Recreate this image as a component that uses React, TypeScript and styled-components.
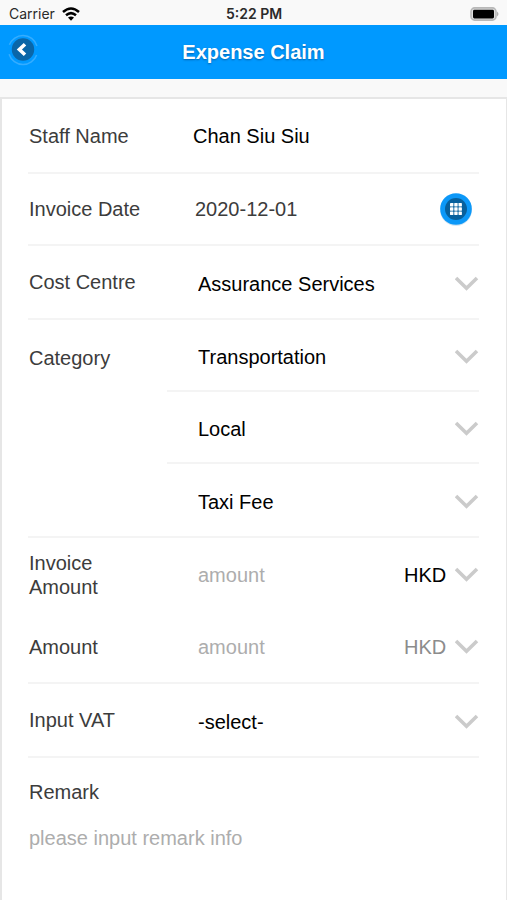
import React, { useState } from "react";
import styled, { createGlobalStyle } from "styled-components";

const GlobalStyle = createGlobalStyle`
  *, *::before, *::after { box-sizing: border-box; }
  body {
    margin: 0;
    background: #f9f9f9;
    color: #3c3c3c;
    font-family: "Liberation Sans", Arial, Helvetica, sans-serif;
    font-size: 20px;
    line-height: 24px;
  }
  button, input, select, textarea {
    margin: 0;
    padding: 0;
    border: 0;
    background: transparent;
    font: inherit;
    color: inherit;
  }
`;

const Screen = styled.div`
  display: flex;
  flex-direction: column;
  min-height: 100vh;
`;

const StatusBar = styled.div`
  display: grid;
  grid-template-columns: 1fr auto 1fr;
  align-items: center;
  height: 25px;
  padding: 2px 8px 0 9px;
  font-family: Inter, sans-serif;
  font-size: 14px;
  line-height: 20px;
  color: #2a2a2a;
`;

const Carrier = styled.div`
  display: flex;
  align-items: center;
  gap: 7px;
  font-family: Inter, sans-serif;
  font-size: 14px;
`;

const Clock = styled.div`
  font-weight: 600;
`;

const BatteryIcon = styled.svg`
  justify-self: end;
`;

const Header = styled.header`
  display: grid;
  grid-template-columns: 40px 1fr 40px;
  align-items: center;
  height: 54px;
  padding: 0 7px;
  background: #0099ff;
`;

const BackButton = styled.button`
  display: flex;
  width: 32px;
  height: 32px;
  margin-bottom: 4px;
`;

const Title = styled.h1`
  margin: 0;
  color: #fff;
  font-size: 20px;
  font-weight: 700;
  line-height: 24px;
  text-align: center;
  text-shadow: 0 1px 2px rgba(0, 50, 100, 0.5);
`;

const Card = styled.form`
  flex: 1;
  margin-top: 18px;
  padding: 0 27px 0 26px;
  background: #fff;
  border: solid #e6e6e6;
  border-width: 2px 1px 0 2px;
`;

const Row = styled.div<{ $height?: number; $divided?: boolean }>`
  display: grid;
  grid-template-columns: 139px 1fr;
  align-items: center;
  height: ${(p) => p.$height ?? 74}px;
  border-bottom: ${(p) => (p.$divided === false ? "0" : "2px solid #f4f4f4")};
`;

const Label = styled.label`
  padding: 0 16px 0 1px;
`;

const Name = styled.output`
  padding-left: 26px;
  color: #000;
`;

const DateField = styled.div`
  display: flex;
  align-items: center;
  justify-content: space-between;
  padding: 0 6px 0 28px;
`;

const TextInput = styled.input`
  flex: 1;
  min-width: 0;
  width: 100%;
  height: 32px;
  outline: none;
  &::placeholder { color: #adadad; opacity: 1; }
`;

const CalendarButton = styled.button`
  display: flex;
  flex: none;
  width: 34px;
  height: 34px;
`;

const Group = styled.fieldset`
  display: grid;
  grid-template-columns: 139px 1fr;
  min-width: 0;
  margin: 0;
  padding: 0;
  border: 0;
  border-bottom: 2px solid #f4f4f4;
`;

const GroupLabel = styled.div`
  padding: 26px 0 0 1px;
`;

const Option = styled.div<{ $last?: boolean }>`
  display: grid;
  align-items: center;
  height: 72px;
  border-bottom: ${(p) => (p.$last ? "0" : "2px solid #f4f4f4")};
`;

const Picker = styled.div<{ $compact?: boolean }>`
  display: grid;
  grid-template-columns: 1fr 24px;
  align-items: center;
  padding: ${(p) => (p.$compact ? "0" : "3px 0 0 31px")};
`;

const Select = styled.select`
  grid-area: 1 / 1 / 2 / 3;
  width: 100%;
  height: 40px;
  appearance: none;
  outline: none;
  color: #000;
  opacity: 1;
  &:disabled { color: #8c8c8c; }
`;

const ChevronIcon = styled.svg`
  grid-area: 1 / 2;
  pointer-events: none;
`;

const AmountField = styled.div`
  display: grid;
  grid-template-columns: 1fr 75px;
  align-items: center;
  padding-left: 31px;
`;

const InvoiceLabel = styled(Label)`
  padding-right: 36px;
`;

const Remark = styled.div`
  display: grid;
  gap: 22px;
  padding: 22px 0 0 1px;
`;

const TextArea = styled.textarea`
  display: block;
  width: 100%;
  height: 48px;
  resize: none;
  outline: none;
  &::placeholder { color: #adadad; opacity: 1; }
`;

const Chevron = () => (
  <ChevronIcon width="24" height="16" viewBox="0 0 24 16" aria-hidden="true">
    <path d="M1 2 L11.5 12.2 L22 2" fill="none" stroke="#cbcbcb" strokeWidth="3.6" />
  </ChevronIcon>
);

type DropdownProps = {
  id?: string;
  name: string;
  options: string[];
  compact?: boolean;
  disabled?: boolean;
};

const Dropdown = ({ id, name, options, compact, disabled }: DropdownProps) => (
  <Picker $compact={compact}>
    <Select id={id} aria-label={id ? undefined : name} disabled={disabled}>
      {options.map((o) => (
        <option key={o}>{o}</option>
      ))}
    </Select>
    <Chevron />
  </Picker>
);

const categories = [
  { name: "Category", value: "Transportation" },
  { name: "Area", value: "Local" },
  { name: "Expense type", value: "Taxi Fee" },
];

export default function App() {
  const [date, setDate] = useState("2020-12-01");

  return (
    <Screen>
      <GlobalStyle />
      <StatusBar>
        <Carrier>
          Carrier
          <svg width="18" height="14" viewBox="0 0 18 14" aria-hidden="true">
            <g fill="none" stroke="#000" strokeWidth="2.5">
              <path d="M1 5 Q9 -2 17 5" />
              <path d="M4 8.3 Q9 4 14 8.3" />
            </g>
            <path d="M6 10.6 Q9 8.2 12 10.6 L9 13.8 Z" fill="#000" />
          </svg>
        </Carrier>
        <Clock>5:22 PM</Clock>
        <BatteryIcon width="30" height="14" viewBox="0 0 30 14" aria-hidden="true">
          <rect x="2" y="0.9" width="25" height="12.2" rx="3.6" fill="#dedede" stroke="#b8b8b8" strokeWidth="1.6" />
          <rect x="4" y="2.8" width="21" height="8.6" rx="1.4" fill="#000" />
          <path d="M28 4.6 Q31 7 28 9.4 Z" fill="#b0b0b0" />
        </BatteryIcon>
      </StatusBar>

      <Header>
        <BackButton type="button" aria-label="Back">
          <svg width="32" height="32" viewBox="0 0 32 32" aria-hidden="true">
            <circle cx="16" cy="16" r="14.5" fill="none" stroke="#35adff" strokeWidth="1.5" strokeDasharray="36 9.5" strokeDashoffset="-5" />
            <circle cx="16" cy="15.5" r="11.2" fill="#0a66a8" />
            <path d="M18 10.3 L12.4 15.5 L18 20.7" fill="none" stroke="#fff" strokeWidth="3.6" />
          </svg>
        </BackButton>
        <Title>Expense Claim</Title>
      </Header>

      <Card>
        <Row $height={75}>
          <Label htmlFor="staff">Staff Name</Label>
          <Name id="staff">Chan Siu Siu</Name>
        </Row>
        <Row $height={72}>
          <Label htmlFor="date">Invoice Date</Label>
          <DateField>
            <TextInput id="date" value={date} onChange={(e) => setDate(e.target.value)} />
            <CalendarButton type="button" aria-label="Choose date">
              <svg width="34" height="34" viewBox="0 0 34 34" aria-hidden="true">
                <circle cx="17" cy="18" r="16" fill="#d5e6f2" />
                <circle cx="17" cy="17" r="15.8" fill="#0c98f8" />
                <circle cx="17" cy="17" r="11" fill="#07609d" />
                <g fill="#fff">
                  {[11, 15.25, 19.5].map((y) =>
                    [11, 15.25, 19.5].map((x) => (
                      <rect key={`${x}-${y}`} x={x} y={y} width="3.4" height="3.4" rx="0.4" />
                    )),
                  )}
                </g>
              </svg>
            </CalendarButton>
          </DateField>
        </Row>
        <Row>
          <Label htmlFor="centre">Cost Centre</Label>
          <Dropdown id="centre" name="Cost Centre" options={["Assurance Services"]} />
        </Row>
        <Group aria-label="Category">
          <GroupLabel>Category</GroupLabel>
          <div>
            {categories.map((c, i) => (
              <Option key={c.name} $last={i === categories.length - 1}>
                <Dropdown name={c.name} options={[c.value]} />
              </Option>
            ))}
          </div>
        </Group>
        <Row $divided={false}>
          <InvoiceLabel htmlFor="invoice-amount">Invoice Amount</InvoiceLabel>
          <AmountField>
            <TextInput id="invoice-amount" placeholder="amount" />
            <Dropdown name="Invoice currency" options={["HKD"]} compact />
          </AmountField>
        </Row>
        <Row $height={72}>
          <Label htmlFor="amount">Amount</Label>
          <AmountField>
            <TextInput id="amount" placeholder="amount" />
            <Dropdown name="Currency" options={["HKD"]} compact disabled />
          </AmountField>
        </Row>
        <Row>
          <Label htmlFor="vat">Input VAT</Label>
          <Dropdown id="vat" name="Input VAT" options={["-select-"]} />
        </Row>
        <Remark>
          <label htmlFor="remark">Remark</label>
          <TextArea id="remark" placeholder="please input remark info" />
        </Remark>
      </Card>
    </Screen>
  );
}
